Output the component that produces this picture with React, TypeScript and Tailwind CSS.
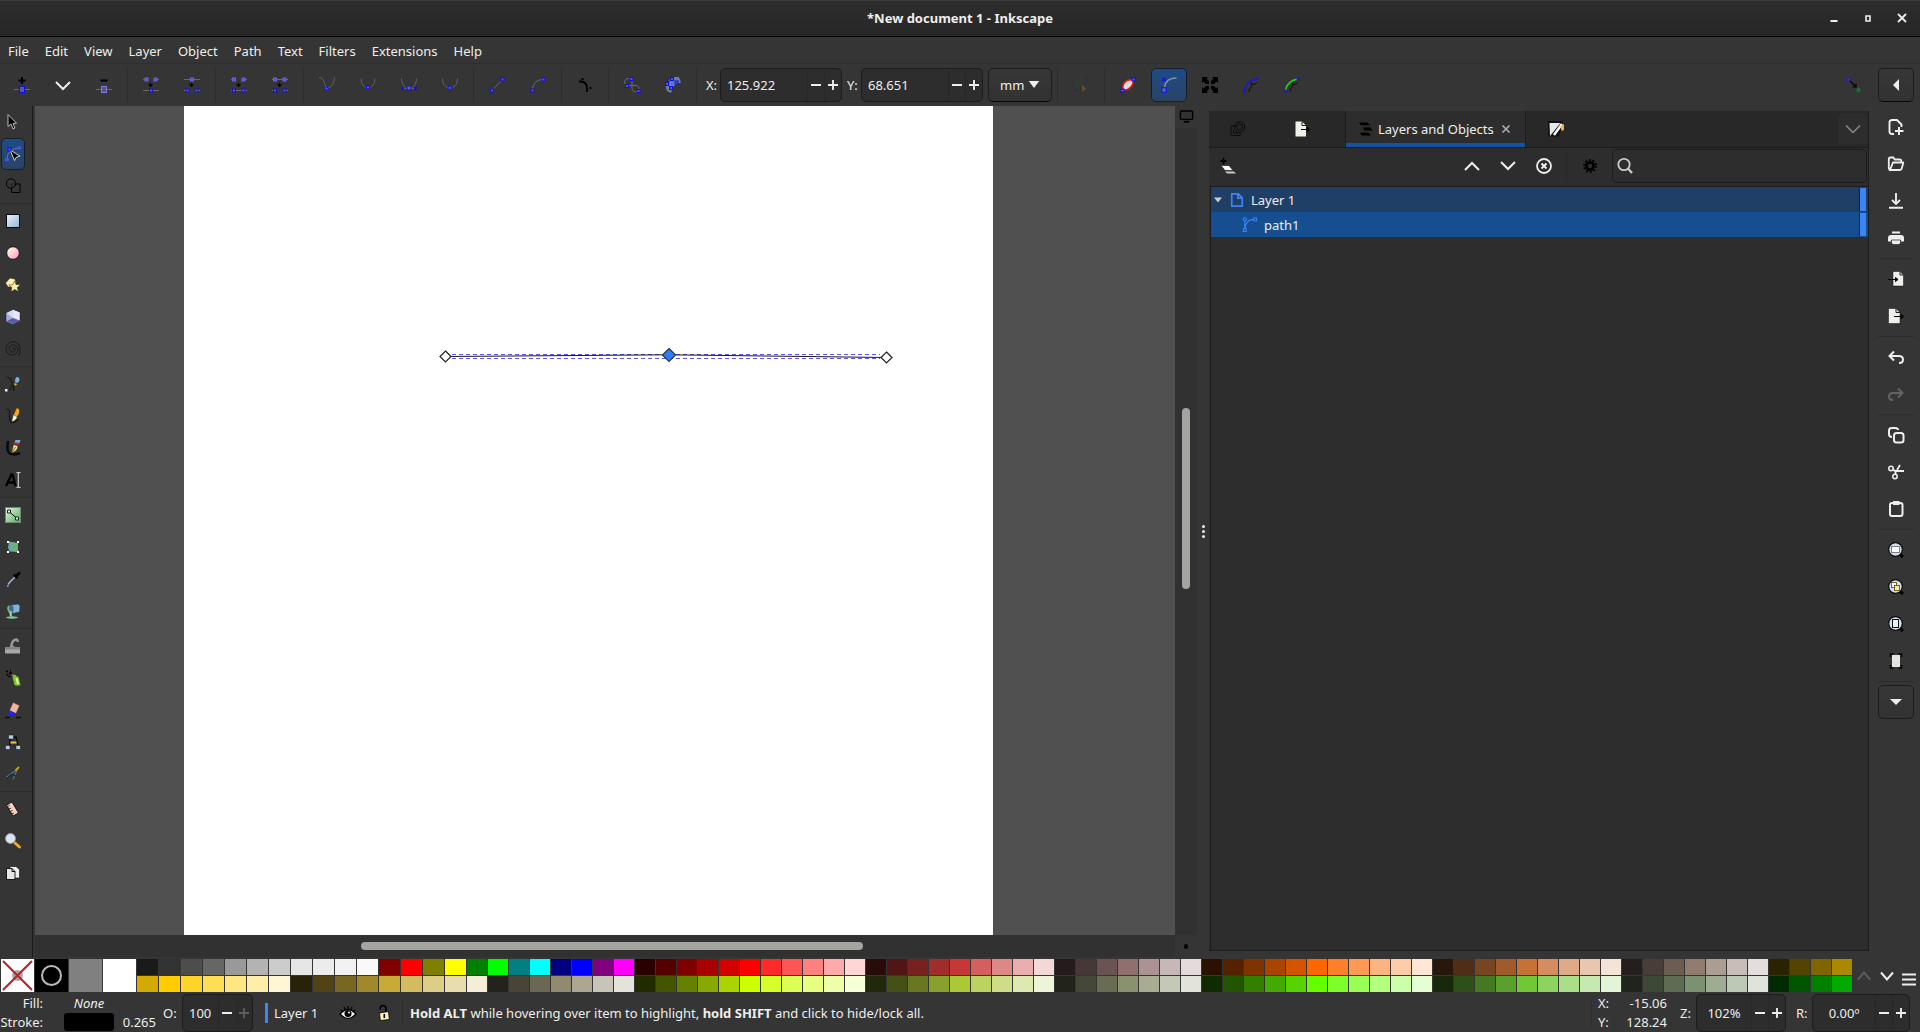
import { useState } from 'react'
import type { ReactNode } from 'react'
import clsx from 'clsx'

const menus = ['File', 'Edit', 'View', 'Layer', 'Object', 'Path', 'Text', 'Filters', 'Extensions', 'Help']

const topSwatches = (
  '1a1a1a 333333 4d4d4d 666666 999999 b3b3b3 cccccc e6e6e6 ececec f2f2f2 f9f9f9 ' +
  '800000 ff0000 808000 ffff00 008000 00ff00 008080 00ffff 000080 0000ff 800080 ff00ff ' +
  '2b0000 550000 800000 aa0000 d40000 ff0000 ff2a2a ff5555 ff8080 ffaaaa ffd5d5 ' +
  '280b0b 501616 782121 a02c2c c83737 d35f5f de8787 e9afaf f4d7d7 ' +
  '241c1c 483737 6c5353 916f6f ac9393 c8b7b7 e3dbdb ' +
  '2b1100 552200 803300 aa4400 d45500 ff6600 ff7f2a ff9955 ffb380 ffccaa ffe6d5 ' +
  '28170b 502d16 784421 a05a2c c87137 d38d5f deaa87 e9c6af f4e3d7 ' +
  '241f1c 483e37 6c5d53 917c6f ac9d93 c8beb7 e3dedb 2b2200 554400 806600 aa8800'
).split(' ')

const bottomSwatches = (
  'd4aa00 ffcc00 ffd42a ffdd55 ffe680 ffeeaa fff6d5 ' +
  '28220b 504416 786721 a0892c c8ab37 d3bc5f decd87 e9ddaf f4eed7 ' +
  '24221c 484537 6c6753 918a6f aca793 c8c4b7 e3e2db ' +
  '222b00 445500 668000 88aa00 aad400 ccff00 d4ff2a ddff55 e5ff80 eeffaa f6ffd5 ' +
  '22280b 445016 677821 89a02c abc837 bcd35f cdde87 dde9af eef4d7 ' +
  '22241c 454837 676c53 8a916f a7ac93 c4c8b7 e2e3db ' +
  '112b00 225500 338000 44aa00 55d400 66ff00 7fff2a 99ff55 b3ff80 ccffaa e5ffd5 ' +
  '17280b 2d5016 447821 5aa02c 71c837 8dd35f aade87 c6e9af e3f4d7 ' +
  '1f241c 3e4837 5d6c53 7c916f 9dac93 bec8b7 dee3db 002b00 005500 008000 00aa00'
).split(' ')

function Icon({ children, className = 'size-4' }: { children: ReactNode; className?: string }) {
  return (
    <svg viewBox="0 0 16 16" fill="none" className={clsx('shrink-0 overflow-visible', className)} aria-hidden="true">
      {children}
    </svg>
  )
}

// Square path node centred on x, y
function Node({ x, y, s = 3, light = false }: { x: number; y: number; s?: number; light?: boolean }) {
  return (
    <rect
      x={x - s / 2}
      y={y - s / 2}
      width={s}
      height={s}
      fill={light ? '#5a5a8c' : '#62629a'}
      stroke={light ? '#6a62ee' : '#0c0cf4'}
    />
  )
}

const arrowDown = <path d="M7.5 5v3M5.5 7.5h4L7.5 10z" fill="#000" stroke="#000" strokeWidth=".6" />

const nodeIcons = {
  add: (
    <>
      <path d="M8 0v7M4.500 3.500h7" stroke="#000" strokeWidth="2" />
      <path d="M0 12.500h16" stroke="#6a6a6a" />
      <rect x="5.500" y="9.500" width="5" height="6" fill="#5a5a94" stroke="#0c0cf4" />
    </>
  ),
  chevron: <path d="M1 5l7 7 7-7" stroke="#eee" strokeWidth="2" />,
  remove: (
    <>
      <path d="M4.500 3.500h7" stroke="#000" strokeWidth="2" />
      <path d="M0 12.500h16" stroke="#6a6a6a" />
      <rect x="5.500" y="9.500" width="5" height="6" fill="#555588" stroke="#7c78dc" />
    </>
  ),
  join: (
    <>
      <path d="M0 2.500h3M13 2.500h3M0 13.500h16" stroke="#6a6a6a" />
      <Node x={3.5} y={2.5} light />
      <Node x={12.5} y={2.5} light />
      {arrowDown}
      <Node x={8} y={13.5} />
    </>
  ),
  split: (
    <>
      <path d="M0 2.500h16M0 13.500h3M13 13.500h3" stroke="#6a6a6a" />
      <Node x={8} y={2.5} light />
      {arrowDown}
      <Node x={3.5} y={13.5} />
      <Node x={12.5} y={13.5} />
    </>
  ),
  joinSegment: (
    <>
      <path d="M0 2.500h3M13 2.500h3M0 13.500h16" stroke="#6a6a6a" />
      <Node x={3} y={2.5} light />
      <Node x={12.5} y={2.5} light />
      {arrowDown}
      <Node x={3} y={13.5} />
      <Node x={12.5} y={13.5} />
    </>
  ),
  deleteSegment: (
    <>
      <path d="M0 2.500h16M0 13.500h3M13 13.500h3" stroke="#6a6a6a" />
      <Node x={3} y={2.5} light />
      <Node x={12.5} y={2.5} light />
      {arrowDown}
      <Node x={3} y={13.5} />
      <Node x={12.5} y={13.5} />
    </>
  ),
  cusp: (
    <>
      <path d="M0 .5C6 1 5 8 7.500 11.500C13 10 15 7 15.500.5" stroke="#636363" />
      <path d="M7.500 9.500l2 2-2 2-2-2z" fill="#5050a8" stroke="#0c0cf4" />
    </>
  ),
  smooth: (
    <>
      <path d="M1 1.500C1 14 15 14 15 1.500" stroke="#636363" />
      <Node x={8} y={10.5} />
    </>
  ),
  symmetric: (
    <>
      <path d="M.5 1.500C.5 14.500 15.500 14.500 15.500 1.500M1 11.500h14" stroke="#636363" />
      <Node x={8} y={11} s={4} />
      <circle cx="1.500" cy="11.500" r="1.300" fill="#0c0cf4" />
      <circle cx="14.500" cy="11.500" r="1.300" fill="#0c0cf4" />
    </>
  ),
  auto: (
    <>
      <path d="M.5 1.500C.5 14.500 15.500 14.500 15.500 1.500" stroke="#636363" />
      <circle cx="8" cy="11" r="2" fill="#5050a8" stroke="#0c0cf4" />
    </>
  ),
  line: (
    <>
      <path d="M3 13.500L13.500 2.500" stroke="#6a6a6a" />
      <Node x={3} y={13.5} />
      <Node x={13.5} y={2.5} />
    </>
  ),
  curve: (
    <>
      <path d="M2.500 13.500C2.500 6 7 2.500 13.500 2.500" stroke="#6a6a6a" />
      <Node x={2.5} y={13.5} />
      <Node x={13.5} y={2.5} />
    </>
  ),
  corners: (
    <>
      <path d="M2 4.500h3q5 1 5 7v3.500" stroke="#000" strokeWidth="1.800" />
      <path d="M4.500 1h2v2h-2zM12.500 10h2v2h-2z" fill="#000" />
    </>
  ),
  objectToPath: (
    <>
      <path d="M7 1.500H4Q.5 2 .5 5T3 8.500h9q3.500 0 3 5M8 2v9q0 4 5 4" stroke="#6a6a6a" />
      <Node x={7.5} y={2} />
      <Node x={3} y={9} />
      <Node x={14.5} y={14} />
    </>
  ),
  strokeToPath: (
    <>
      <path d="M0 7l4-1 1-5 4-1h5l2 5.500-5 1.500-3 3-2 6-4-2-1-3z" fill="#667daa" />
      <Node x={7} y={2} />
      <Node x={11.5} y={5.5} />
      <Node x={2} y={7} />
      <Node x={6} y={11} />
    </>
  ),
}

const node = (name: keyof typeof nodeIcons) => <Icon>{nodeIcons[name]}</Icon>

function Sep() {
  return <span className="mx-[2px] h-[34px] w-[2px] border-r border-[#2c2c2c]" />
}

function ToolButton({ label, children }: { label: string; children: ReactNode }) {
  return (
    <button aria-label={label} className="flex h-[34px] w-[41px] shrink-0 items-center justify-center">
      {children}
    </button>
  )
}

function Spin({ label, value, className, center = false, full = false }: {
  label: string
  value: string
  className: string
  center?: boolean
  full?: boolean
}) {
  const [text, setText] = useState(value)
  return (
    <span className={clsx('flex overflow-hidden rounded-[5px] border border-[#1c1c1c] bg-[#2d2d2d]', className)}>
      <input
        aria-label={label}
        value={text}
        onChange={(e) => setText(e.target.value)}
        className={clsx('w-0 grow bg-transparent outline-none', center ? 'text-center' : 'pl-[6px]')}
      />
      <button aria-label={`${label} decrease`} className="flex w-[17px] items-center justify-center border-l border-[#282828]">
        <Icon className="size-[10px]"><path d="M0 8h16" stroke="#eee" strokeWidth="3" /></Icon>
      </button>
      <button
        aria-label={`${label} increase`}
        disabled={full}
        className={clsx('flex w-[17px] items-center justify-center border-l border-[#282828]', full && 'opacity-25')}
      >
        <Icon className="size-[10px]"><path d="M0 8h16M8 0v16" stroke="#eee" strokeWidth="3" /></Icon>
      </button>
    </span>
  )
}

function TitleBar() {
  return (
    <header className="grid h-[37px] shrink-0 grid-cols-[1fr_auto_1fr] items-center border-t border-b border-t-[#3a3a3a] border-b-[#060606] bg-linear-to-b from-[#2d2d2d] to-[#262626] pb-[2px]">
      <span />
      <h1 className="text-[13px] font-bold">*New document 1 - Inkscape</h1>
      <div className="flex justify-end gap-[18px] pr-[10px]">
        <button aria-label="Minimize"><Icon><path d="M4.500 11h7" stroke="#eee" strokeWidth="2" /></Icon></button>
        <button aria-label="Maximize"><Icon><path d="M6 6h4v5H6z" stroke="#eee" strokeWidth="1.600" /></Icon></button>
        <button aria-label="Close"><Icon><path d="M4 4l8 8M12 4l-8 8" stroke="#eee" strokeWidth="1.800" /></Icon></button>
      </div>
    </header>
  )
}

function NodeToolbar() {
  return (
    <div className="flex h-[42px] shrink-0 items-center pl-[1px]">
      <ToolButton label="Insert node">{node('add')}</ToolButton>
      <ToolButton label="Insert options">{node('chevron')}</ToolButton>
      <ToolButton label="Delete node">{node('remove')}</ToolButton>
      <Sep />
      <ToolButton label="Join nodes">{node('join')}</ToolButton>
      <ToolButton label="Break nodes">{node('split')}</ToolButton>
      <Sep />
      <ToolButton label="Join with segment">{node('joinSegment')}</ToolButton>
      <ToolButton label="Delete segment">{node('deleteSegment')}</ToolButton>
      <Sep />
      <ToolButton label="Cusp">{node('cusp')}</ToolButton>
      <ToolButton label="Smooth">{node('smooth')}</ToolButton>
      <ToolButton label="Symmetric">{node('symmetric')}</ToolButton>
      <ToolButton label="Auto smooth">{node('auto')}</ToolButton>
      <Sep />
      <ToolButton label="Line">{node('line')}</ToolButton>
      <ToolButton label="Curve">{node('curve')}</ToolButton>
      <Sep />
      <ToolButton label="Add corners effect">{node('corners')}</ToolButton>
      <Sep />
      <ToolButton label="Object to path">{node('objectToPath')}</ToolButton>
      <ToolButton label="Stroke to path">{node('strokeToPath')}</ToolButton>
      <Sep />
      <span className="ml-[7px] w-[14px]">X:</span>
      <Spin label="X" value="125.922" className="h-[34px] w-[122px]" />
      <span className="ml-[5px] w-[14px]">Y:</span>
      <Spin label="Y" value="68.651" className="h-[34px] w-[122px]" />
      <span className="relative ml-[5px] flex">
        <select aria-label="Unit" className="h-[34px] w-16 appearance-none rounded-[5px] border border-[#1c1c1c] border-b-[#080808] bg-linear-to-b from-[#373737] to-[#323232] pl-[11px] outline-none">
          <option>mm</option>
          <option>px</option>
          <option>in</option>
        </select>
        <svg viewBox="0 0 12 8" className="pointer-events-none absolute top-[13px] right-[12px] h-[7px] w-[12px]" aria-hidden="true">
          <path d="M0 0h12L6 8z" fill="#eee" />
        </svg>
      </span>
      <span className="w-[2px]" />
      <Sep />
      <ToolButton label="Next path effect parameter">
        <Icon>
          <path d="M3 12Q3 5 9 4M3 3l3 4" stroke="#2c422c" strokeWidth="1.500" />
          <path d="M9 8l4 3.500L9 15z" fill="#5c5230" />
          <circle cx="3" cy="13" r="1.500" fill="#2b2b58" /><circle cx="13" cy="2.500" r="1.500" fill="#2b2b58" />
        </Icon>
      </ToolButton>
      <Sep />
      <ToolButton label="Show path outline">
        <Icon>
          <path d="M3 13C2 6 6 2 13 3c1 5-4 11-10 10z" fill="#ddd" stroke="#f01010" strokeWidth="1.500" />
          <Node x={2.5} y={13.5} />
          <Node x={13.5} y={2.5} />
        </Icon>
      </ToolButton>
      <span className="flex w-[41px] justify-center">
        <button aria-label="Show Bezier handles" aria-pressed="true" className="flex h-[34px] w-9 items-center justify-center rounded-[5px] border border-[#191e26] bg-linear-to-b from-[#1c4b87] to-[#2a4365]">
          <Icon>
            <path d="M3 12V3" stroke="#2a48b0" />
            <path d="M3.500 11C4 5 8 1 15.500 1" stroke="#8a949f" strokeWidth="1.300" />
            <circle cx="3" cy="2.500" r="1.400" stroke="#1010f0" strokeWidth="1.200" />
            <Node x={3} y={13} s={4.5} />
          </Icon>
        </button>
      </span>
      <ToolButton label="Show transform handles">
        <Icon>
          <path d="M0 0h6L4.500 1.500 7 4v3H4L1.500 4.500 0 6zM16 0h-6l1.500 1.500L9 4v3h3l2.500-2.500L16 6zM0 16h6l-1.500-1.500L7 12V9H4l-2.500 2.500L0 10zM16 16h-6l1.500-1.500L9 12V9h3l2.500 2.500L16 10z" fill="#000" />
        </Icon>
      </ToolButton>
      <ToolButton label="Show mask">
        <Icon>
          <path d="M6 15q0-3 2-5T8 6l2 1.500q2 0 4-2" stroke="#0c0c0c" strokeWidth=".9" />
          <path d="M1.500 13.500Q3 4 13.500 2" stroke="#1414e6" strokeWidth="1.500" />
          <circle cx="1.500" cy="14" r="1.600" fill="#1414e6" /><circle cx="14" cy="1.800" r="1.600" fill="#1414e6" />
        </Icon>
      </ToolButton>
      <ToolButton label="Show clip">
        <Icon>
          <path d="M6 15q0-3 2-5T8 6l2 1.500q2 0 4-2" stroke="#0c0c0c" strokeWidth=".9" />
          <path d="M1.500 13.500Q3 4 13.500 2" stroke="#18e018" strokeWidth="1.500" />
          <circle cx="1.500" cy="14" r="1.600" fill="#1414e6" /><circle cx="14" cy="1.800" r="1.600" fill="#1414e6" />
        </Icon>
      </ToolButton>
      <span className="grow" />
      <ToolButton label="Snapping">
        <Icon>
          <path d="M4 4l5 5M10 6.500V10H6.500" stroke="#000" strokeWidth="1.200" />
          <circle cx="2.500" cy="2.500" r="1.800" fill="#3c3ca0" stroke="#1414e6" />
          <path d="M12.500 10.500l2 2.500-2 2.500-2-2.500z" fill="#285a60" stroke="#108018" />
        </Icon>
      </ToolButton>
      <button aria-label="Snap options" className="mr-[6px] ml-1 flex h-[34px] w-9 items-center justify-center rounded-[5px] border border-[#1c1c1c] border-b-[#080808] bg-linear-to-b from-[#373737] to-[#323232]">
        <Icon><path d="M11 2v12L5 8z" fill="#eee" /></Icon>
      </button>
    </div>
  )
}

const cursor = <path d="M5 .5v12l3-2.500 2 5 2-1-2-4.500 3.500-.3z" fill="#000" stroke="#ccc" strokeWidth=".9" />

const toolGroups: { label: string; icon: ReactNode }[][] = [
  [
    { label: 'Selector', icon: <g transform="translate(-2 0)">{cursor}</g> },
    {
      label: 'Node editor',
      icon: (
        <>
          <path d="M2 13Q2 3 14 2" stroke="#6a7a9a" />
          <rect x="0" y="12" width="4" height="3" fill="#4c50d8" />
          <rect x="12.500" y="0" width="3.500" height="3.500" fill="#4c50d8" />
          <path d="M5 4l4.500 10.500 1.500-3 4-1.500z" fill="#000" stroke="#e8e8e8" strokeWidth=".9" />
          <Node x={4.5} y={3.5} />
        </>
      ),
    },
    {
      label: 'Shape builder',
      icon: (
        <>
          <circle cx="6" cy="5.500" r="4.700" stroke="#000" />
          <path d="M10.500 6H15v8.500H6.500V10" stroke="#000" />
          <path d="M6.500 10V6h4" stroke="#151515" strokeWidth=".6" />
        </>
      ),
    },
  ],
  [
    { label: 'Rectangle', icon: <rect x="1.500" y="1.500" width="13" height="13" fill="url(#blue)" stroke="#0a0a0a" /> },
    { label: 'Ellipse', icon: <circle cx="8" cy="8" r="6.300" fill="url(#pink)" stroke="#0a0a0a" strokeWidth=".9" /> },
    {
      label: 'Star',
      icon: (
        <>
          <path d="M5 1l5 1 1 4-3 4-5 0-2.500-4z" fill="#fff2b0" stroke="#222" strokeWidth=".6" />
          <path d="M9.500 4l1.500 3.500 4.500.2-3.200 2.800 1.200 4-3.800-2-3.700 2.300.8-4.300-3-2.500 4-.3z" fill="#fdf096" stroke="#222" strokeWidth=".5" />
        </>
      ),
    },
    {
      label: '3D box',
      icon: (
        <>
          <path d="M1 4l7-3.500 7 3v8L8 15.500l-7-3z" fill="#a9a9dc" stroke="#222" strokeWidth=".5" />
          <path d="M1.500 4L8 1l6.500 2.500-1 8L8 9z" fill="#d9d9f2" />
          <path d="M8 1v8l6.500 2.500v-8z" fill="#e6e6fa" />
          <path d="M8 9l6.500 2.500L8 15l-6-3z" fill="#5a5aa8" />
        </>
      ),
    },
    {
      label: 'Spiral',
      icon: <path d="M8 8.500c-1-1 1-2.500 2-1s-.5 4-3 3.500-3.500-4-1.500-6 6-1 7 2-1 6.500-4.500 7S1 12 .8 8.500 4 .8 8 .8 15.500 4 15 9s-1 5-2 6" stroke="#151515" strokeWidth=".9" />,
    },
  ],
  [
    {
      label: 'Bezier pen',
      icon: (
        <>
          <path d="M1 1q5 0 6 5t-3 8.500" stroke="#1c1c1c" strokeWidth="1.200" />
          <path d="M9 9q-1 3 0 6" stroke="#111" strokeWidth="1.100" />
          <rect x="0" y="13" width="2.500" height="2.500" fill="#eee" />
          <path d="M12 .5c3 0 4 4 1 6.500l-3 0c-1-3 0-5.500 2-6.500z" fill="#7ab2d6" stroke="#111" strokeWidth=".5" />
          <path d="M9.500 7l3 1-3 2z" fill="#f4b52a" />
        </>
      ),
    },
    {
      label: 'Pencil',
      icon: (
        <>
          <path d="M1 1q4 0 3.500 5T6 14.500q4 1 7-3" stroke="#151515" strokeWidth="1.200" />
          <path d="M11.500 0c3 0 3.500 3 2.500 6L12 9 8.500 7z" fill="#f8a41c" stroke="#222" strokeWidth=".4" />
          <path d="M8.500 7L12 9q-1 3-5 4.500z" fill="#fff4cf" />
        </>
      ),
    },
    {
      label: 'Calligraphy',
      icon: (
        <>
          <path d="M3 1Q1 13 6 14t9-1" stroke="#0a0a0a" strokeWidth="2.600" />
          <path d="M10.500 0h5l-1 3-5-.5z" fill="#7ab2d6" />
          <path d="M9.500 2.500l5 .5-.5 2-5-1z" fill="#d02a2a" />
          <path d="M8.500 4.500L13 6q0 5-6.500 7z" fill="#fbe08a" stroke="#222" strokeWidth=".5" />
          <path d="M10.500 7L7 12.500" stroke="#5a4210" strokeWidth=".8" />
        </>
      ),
    },
    {
      label: 'Text',
      icon: (
        <>
          <path d="M1 14L6.500 2.500h1L10.500 14M3.500 10.500h6" stroke="#000" strokeWidth="2.400" />
          <path d="M11.500.5h1l.8.8.8-.8h1.500M13.300 1v14M11.500 15.500h1l.8-.8.8.8h1.500" stroke="#ccc" strokeWidth="1.200" />
        </>
      ),
    },
  ],
  [
    {
      label: 'Gradient',
      icon: (
        <>
          <rect x=".5" y=".5" width="15" height="15" fill="url(#green)" stroke="#6d8a6d" />
          <path d="M4 4.500l8 7" stroke="#111" />
          <path d="M2.500 3h3v3h-3zM10.500 10h3v3h-3z" fill="#eee" stroke="#222" />
        </>
      ),
    },
    {
      label: 'Mesh',
      icon: (
        <>
          <path d="M4 2.500l9 1.500-.5 6 1 3-9-.5-1.500-4z" fill="#6aa8a0" />
          <path d="M8 4l5 0v8.500L8 12z" fill="#69b56f" />
          <path d="M2 2h2v2H2zM12 2h2v2h-2zM2 12h2v2H2zM12 12h2v2h-2z" fill="#fff" />
        </>
      ),
    },
    {
      label: 'Dropper',
      icon: (
        <>
          <path d="M10 6L5 11l-2 2.500" stroke="#9cb8d8" strokeWidth="1.500" />
          <path d="M9 3.500l3.500 3.500M11 5L15 1.500" stroke="#000" strokeWidth="2.600" />
          <circle cx="2.800" cy="15" r="1" fill="#6f9cd8" />
        </>
      ),
    },
    {
      label: 'Paint bucket',
      icon: (
        <>
          <path d="M6 2l7-1 2 2-.5 6-7 1.500z" fill="#7db3d8" stroke="#233" strokeWidth=".5" />
          <ellipse cx="6" cy="6" rx="2.500" ry="4" fill="#45668a" />
          <path d="M4 3Q2 5 4 8t1.500 5" stroke="#6cc08a" strokeWidth="1.600" />
          <path d="M6 8v6" stroke="#e6f4e8" />
          <ellipse cx="7" cy="14.500" rx="6" ry="1.200" fill="#7ccf90" />
        </>
      ),
    },
  ],
  [
    {
      label: 'Tweak',
      icon: (
        <>
          <rect x="0" y="9" width="15" height="6.500" fill="#a8a8a8" />
          <path d="M0 9h4.500l3-2 3 2H15v2.500H0z" fill="#858585" />
          <path d="M6 9q1-7 5-7.500 2 0 1.500 2.500" stroke="#9a9a9a" strokeWidth="2.400" />
        </>
      ),
    },
    {
      label: 'Spray',
      icon: (
        <>
          <path d="M1 1.500h2M1.500 5h2M4 3h3M5 1h1M3.500 6.500h2" stroke="#000" strokeWidth="1.400" />
          <path d="M7 4.500l4 .5v2H8z" fill="#c89a3c" />
          <path d="M7.500 7q3-2 6 0l2 8q-3 1.500-6 0z" fill="#7cc42c" />
          <path d="M11.500 8l1.500 6" stroke="#d6f5a8" strokeWidth="2" />
        </>
      ),
    },
    {
      label: 'Eraser',
      icon: (
        <>
          <path d="M0 15.500h5M11 15.500h5" stroke="#111" strokeWidth="1.300" />
          <path d="M8 .5l6.500 3L11 11.500 4.500 8.500z" fill="#f2b59c" stroke="#333" strokeWidth=".4" />
          <path d="M4.500 8.500l6.500 3L8.500 15 2.500 12z" fill="#2424e0" />
        </>
      ),
    },
    {
      label: 'Connector',
      icon: (
        <>
          <path d="M6 3h5l2 8M5 5v7M5 5v4" stroke="#0a0a0a" strokeWidth="1.300" />
          <path d="M3.500 1h5v4h-5zM.5 11.500h4.500v4H.5zM11 11.500h4.500v4H11z" fill="#b6cce6" stroke="#111" strokeWidth=".5" />
          <path d="M5.500 7.500h6v2h-6z" fill="#f4c63c" />
        </>
      ),
    },
    {
      label: 'LPE tool',
      icon: (
        <>
          <path d="M12 3.500L1.500 11M12 4L8 13.500" stroke="#4c7690" strokeWidth="1.200" />
          <path d="M2 13q3-7 9-3" stroke="#1c262c" />
          <path d="M10.500 4.500L14 1" stroke="#c2a42c" strokeWidth="1.800" />
        </>
      ),
    },
  ],
  [
    {
      label: 'Measure',
      icon: (
        <>
          <path d="M1.500 4l5.500-3 6.500 11L8 15z" fill="#f7cfc0" stroke="#111" strokeWidth=".9" />
          <path d="M2.500 5.500l2-1M4 8l2-1M5.500 10.500l2-1M7 13l2-1" stroke="#222" strokeWidth=".9" />
        </>
      ),
    },
    {
      label: 'Zoom',
      icon: (
        <>
          <path d="M10 10l4.500 4" stroke="#f2a91c" strokeWidth="3" strokeLinecap="round" />
          <circle cx="5.500" cy="5.500" r="5" fill="#d8e6f4" stroke="#8a96a2" />
        </>
      ),
    },
    {
      label: 'Pages',
      icon: (
        <>
          <path d="M5 1.500h6l3.500 3V13H5z" fill="#eee" stroke="#0a0a0a" strokeWidth=".6" />
          <path d="M1.500 3.500H7l3 3V14.500H1.500z" fill="#e6e6e6" stroke="#0a0a0a" strokeWidth=".9" />
          <path d="M7 3.500v3h3" stroke="#0a0a0a" />
        </>
      ),
    },
  ],
]

function Toolbox() {
  return (
    <nav aria-label="Tools" className="flex w-[33px] shrink-0 flex-col border-r border-[#1a1a1a]">
      {toolGroups.map((group, i) => (
        <div key={group[0].label} className={clsx('flex flex-col', i > 0 && 'mt-[1px] border-t border-[#2c2c2c] pt-[1px]')}>
          {group.map((tool) => (
            <button
              key={tool.label}
              aria-label={tool.label}
              className={clsx(
                'ml-[1px] flex h-8 w-6 items-center justify-center rounded-[5px] border',
                tool.label === 'Node editor' ? 'border-[#191e26] bg-linear-to-b from-[#1c4b87] to-[#2a4365]' : 'border-transparent'
              )}
            >
              <Icon>{tool.icon}</Icon>
            </button>
          ))}
        </div>
      ))}
    </nav>
  )
}

function Canvas() {
  return (
    <div className="grid min-w-0 grow grid-cols-[1fr_22px] grid-rows-[1fr_22px]">
      <div className="flex overflow-hidden bg-[#505050] pl-[149px]">
        <div className="w-[809px] shrink-0 bg-white">
          <svg width="809" height="500" fill="none" aria-label="path1">
            <path d="M268 248.500H696M268 252.500H696" stroke="#5b57e6" strokeDasharray="4 3" />
            <path d="M262 250.500L485 248.800L702 251.500" stroke="#1a1a1a" />
            <path d="M261.500 245l5.500 5.500-5.500 5.500-5.500-5.500zM702.500 246l5.500 5.500-5.500 5.500-5.500-5.500z" fill="#fff" stroke="#222" strokeWidth="1.200" />
            <path d="M485 242.500l6.500 6.500-6.500 6.500-6.500-6.500z" fill="#2a7fff" stroke="#333" strokeWidth="1.200" />
          </svg>
        </div>
      </div>
      <div className="flex flex-col items-center bg-[#313131]">
        <button aria-label="Display mode" className="flex h-[22px] w-full items-center justify-center bg-[#353535]">
          <Icon className="size-[15px]">
            <rect x="1.500" y="1" width="13" height="9" rx="1" fill="#333" stroke="#000" strokeWidth="1.500" />
            <path d="M5 12.500h6" stroke="#000" strokeWidth="2" />
          </Icon>
        </button>
        <div className="mt-[280px] h-[181px] w-2 rounded-full bg-[#a4a4a1]" />
      </div>
      <div className="flex items-center bg-[#313131]">
        <div className="ml-[326px] h-2 w-[502px] rounded-full bg-[#a4a4a1]" />
      </div>
      <button aria-label="Color management" className="flex items-center justify-center bg-[#353535]">
        <span className="h-[5px] w-1 rounded-full bg-black" />
      </button>
    </div>
  )
}

function LayersPanel() {
  return (
    <section className="mt-[5px] mb-[6px] flex w-[660px] shrink-0 flex-col border-r border-b border-[#1c1c1c] bg-[#2d2d2d]">
      <div role="tablist" className="flex h-[37px] shrink-0 border-b border-[#1c1c1c] bg-[#282828]">
        <button role="tab" aria-label="Fill and Stroke" className="flex w-[58px] items-center justify-center">
          <Icon>
            <path d="M1 5h5M1 5v9.500h9V11" stroke="#0c0c0c" />
            <circle cx="9.500" cy="6" r="5.300" stroke="#0c0c0c" /><circle cx="9.500" cy="6" r="3" stroke="#0c0c0c" />
            <path d="M3.500 9v3H8" stroke="#0c0c0c" />
          </Icon>
        </button>
        <button role="tab" aria-label="Export" className="flex w-[69px] items-center justify-center">
          <Icon>
            <path d="M1.500.5H8l4 4v11H1.500z" fill="#f0f0ea" />
            <path d="M8 .5v4h4" stroke="#222" />
            <path d="M7 8.500h7M13 6.500L15.500 8.500l-2.500 2z" fill="#000" stroke="#000" />
          </Icon>
        </button>
        <div className="ml-[9px] flex items-center border-x border-[#1c1c1c] bg-[#2d2d2d] pr-[15px] pl-3 shadow-[inset_0_-4px_#15539e]">
          <button role="tab" aria-selected="true" className="flex items-center gap-[5px]">
            <Icon className="h-4 w-[15px]">
              <path d="M1 1h9l3 3H3zM5 6.500h8l3 3H7zM2 12h9l3 3H4z" fill="#000" />
            </Icon>
            Layers and Objects
          </button>
          <button aria-label="Close tab" className="ml-2">
            <Icon className="size-2"><path d="M1 1l14 14M15 1L1 15" stroke="#aaa" strokeWidth="3.500" /></Icon>
          </button>
        </div>
        <button role="tab" aria-label="Objects" className="flex w-[60px] items-center justify-center">
          <Icon>
            <path d="M0 0h15L3 15.500H0z" fill="#111" />
            <path d="M1.500 2h11L2 15z" fill="#e8e8e8" />
            <path d="M15 1L3 15.500h7l3-6z" fill="#0c0c0c" />
            <path d="M14 3L6 14" stroke="#fff" strokeWidth="2.500" />
            <path d="M12.500 5L16 3v6l-2.500 1z" fill="#f4b52a" />
          </Icon>
        </button>
        <button aria-label="Tab list" className="mt-[3px] ml-auto flex h-[30px] w-[30px] items-center justify-center rounded bg-[#2d2d2d]">
          <Icon className="size-[14px]"><path d="M0 4l8 8 8-8" stroke="#888" strokeWidth="1.800" /></Icon>
        </button>
      </div>

      <div className="flex h-[38px] shrink-0 items-center pr-[1px] pb-[2px]">
        <button aria-label="Add layer" className="flex w-[38px] justify-center">
          <Icon>
            <path d="M3.500 0v6M.5 3h6" stroke="#000" strokeWidth="1.800" />
            <path d="M1 7.500h8l4 5H5z" fill="#fff" stroke="#111" strokeWidth=".6" />
            <path d="M5 13.500h9l2 2H7z" fill="#ccc" />
          </Icon>
        </button>
        <span className="ml-auto" />
        <button aria-label="Raise" className="flex w-9 justify-center"><Icon><path d="M1 12l7-7 7 7" stroke="#eee" strokeWidth="2" /></Icon></button>
        <button aria-label="Lower" className="flex w-9 justify-center"><Icon><path d="M1 4l7 7 7-7" stroke="#eee" strokeWidth="2" /></Icon></button>
        <button aria-label="Delete" className="flex w-9 justify-center">
          <Icon>
            <circle cx="8" cy="8" r="7" stroke="#eee" strokeWidth="1.800" />
            <path d="M5.500 5.500l5 5M10.500 5.500l-5 5" stroke="#eee" strokeWidth="2" />
          </Icon>
        </button>
        <span className="h-8 w-[5px] border-r border-[#282828]" />
        <button aria-label="Settings" className="flex w-[45px] justify-center">
          <Icon className="size-[14px]">
            <circle cx="8" cy="8" r="4" stroke="#000" strokeWidth="3" />
            <circle cx="8" cy="8" r="6.500" stroke="#000" strokeWidth="3" strokeDasharray="2 2.080" />
          </Icon>
        </button>
        <label className="flex h-[34px] w-[255px] items-center gap-2 rounded-[5px] border border-[#1c1c1c] bg-[#2d2d2d] pl-1">
          <Icon><circle cx="7" cy="6.500" r="5.700" stroke="#ccc" strokeWidth="1.800" /><path d="M11 10.500l4 4.500" stroke="#ccc" strokeWidth="2.200" /></Icon>
          <input type="search" aria-label="Search layers" className="w-0 grow bg-transparent outline-none" />
        </label>
      </div>

      <ul className="ml-[1px] grow border-t border-l border-[#1c1c1c]">
        <li className="flex h-[25px] items-center bg-[#203f66] pr-[2px]">
          <button aria-label="Collapse" className="ml-[3px]"><Icon className="size-2"><path d="M0 3h16l-8 10z" fill="#ccc" /></Icon></button>
          <Icon className="ml-2 size-[14px]"><path d="M2 1h7.500L14 5.500V15H2zM9 1v5h5" stroke="#3d84f5" strokeWidth="1.900" /></Icon>
          <span className="ml-[7px] grow">Layer 1</span>
          <span className="h-[23px] w-[7px] border-l border-[#1c1c1c] bg-[#3d84f5]" />
        </li>
        <li className="flex h-[25px] items-center bg-[#154f91] pr-[2px]">
          <Icon className="ml-[31px] size-[15px]">
            <path d="M3 12.500V4M3.500 12Q4 3 12 2.500" stroke="#3d84f5" strokeWidth="1.200" />
            <path d="M1.500 12.500h3v3h-3zM12.500 1h3v3h-3z" stroke="#3d84f5" strokeWidth="1.200" />
            <circle cx="3" cy="2.500" r="1.700" stroke="#3d84f5" strokeWidth="1.200" />
          </Icon>
          <span className="ml-[7px] grow">path1</span>
          <span className="h-[23px] w-[7px] border-l border-[#1c1c1c] bg-[#3d84f5]" />
        </li>
      </ul>
    </section>
  )
}

const lens = (inner: ReactNode) => (
  <>
    <path d="M11.500 12l3.500 3" stroke="#000" strokeWidth="3" />
    <circle cx="7.500" cy="7.500" r="6.800" fill="#cfe0f2" stroke="#0a0a0a" strokeWidth="1.200" />
    {inner}
  </>
)

const commandGroups: { label: string; icon: ReactNode }[][] = [
  [
    { label: 'New', icon: <path d="M6 15H4q-2.500 0-2.500-2.500v-9Q1.500 1 4 1h5l4.500 4.500V8M11 8v8M7 12h8.500" stroke="#eee" strokeWidth="1.900" /> },
    { label: 'Open', icon: <path d="M2 14q-1.200-1-1.200-2V3q0-1.500 1.500-1.500h3l1.500 2h5q1.500 0 1.500 2v1M2 14l3-7.500h10q.5 0 0 1.500l-1.500 5q-.5 1-2 1z" stroke="#eee" strokeWidth="1.800" /> },
    { label: 'Save', icon: <path d="M8 0v10M4 7l4 4 4-4M1 14.800h14" stroke="#eee" strokeWidth="1.900" /> },
    {
      label: 'Print',
      icon: (
        <>
          <path d="M4 1.500h8v2H4zM3 5h10q3 0 3 3v3.500h-3V10H3v1.500H0V8q0-3 3-3z" fill="#eee" />
          <path d="M3.500 10h9v2.500q0 2-2 2h-5q-2 0-2-2z" fill="#eee" stroke="#353535" strokeWidth=".8" />
        </>
      ),
    },
  ],
  [
    {
      label: 'Import',
      icon: (
        <>
          <path d="M5 .5h7l3.500 3.500v11H5z" fill="#f0f0ea" stroke="#111" strokeWidth=".5" />
          <path d="M12 .5V4h3.500" stroke="#222" />
          <path d="M0 8.500h8M7.500 6.500L10 8.500l-2.500 2z" fill="#000" stroke="#000" />
        </>
      ),
    },
    {
      label: 'Export',
      icon: (
        <>
          <path d="M.5.5H8L12 4.500v11H.5z" fill="#f0f0ea" stroke="#111" strokeWidth=".5" />
          <path d="M8 .5v4h4" stroke="#222" />
          <path d="M6 8.500h8M13 6.500l2.500 2-2.500 2z" fill="#000" stroke="#000" />
        </>
      ),
    },
  ],
  [
    { label: 'Undo', icon: <path d="M6 2.500L1.500 7 6 11.500M1 7h10q4 0 4 3.500T11 14" stroke="#eee" strokeWidth="2" /> },
    { label: 'Redo', icon: <path d="M10 2.500L14.500 7 10 11.500M15 7H5q-4 0-4 3.500T5 14" stroke="#646464" strokeWidth="2" /> },
  ],
  [
    {
      label: 'Copy',
      icon: (
        <>
          <path d="M4 10q-3 0-3-3V3.500Q1 1 3.500 1H7q3 0 3 2" stroke="#eee" strokeWidth="2" />
          <rect x="6" y="6" width="9.500" height="9.500" rx="2.500" stroke="#eee" strokeWidth="2" />
        </>
      ),
    },
    {
      label: 'Cut',
      icon: (
        <>
          <circle cx="3" cy="4.500" r="2.200" stroke="#eee" strokeWidth="1.600" />
          <circle cx="7" cy="12.500" r="2.200" stroke="#eee" strokeWidth="1.600" />
          <path d="M5 5.500l2 1.500h9M7.500 10V7.500M9 6l3-5" stroke="#eee" strokeWidth="1.800" />
        </>
      ),
    },
    {
      label: 'Paste',
      icon: (
        <>
          <rect x="2" y="2" width="12.500" height="13" rx="2" stroke="#eee" strokeWidth="2" />
          <path d="M5 0h6.500v4H5z" fill="#eee" />
        </>
      ),
    },
  ],
  [
    { label: 'Zoom selection', icon: lens(<rect x="3.500" y="4.500" width="8" height="6" fill="#fff" stroke="#111" strokeDasharray="1 1" />) },
    {
      label: 'Zoom drawing',
      icon: lens(
        <>
          <rect x="3.500" y="3.500" width="5" height="5" fill="#fff" stroke="#6a520c" strokeWidth=".9" />
          <rect x="6.500" y="6.500" width="5" height="5" fill="#ffe9a0" stroke="#6a520c" strokeWidth=".9" />
        </>
      ),
    },
    { label: 'Zoom page', icon: lens(<rect x="4.500" y="3.500" width="6" height="8" fill="#eee" stroke="#111" />) },
    {
      label: 'Center page',
      icon: (
        <>
          <rect x="4" y="2" width="8" height="12" fill="#e4e4e0" />
          <path d="M2.500 4V1h3M10.500 1h3v3M2.500 12v3h3M10.500 15h3v-3" stroke="#000" strokeWidth="1.500" />
        </>
      ),
    },
  ],
]

function Commands() {
  return (
    <nav aria-label="Commands" className="flex grow flex-col items-center pt-[2px]">
      {commandGroups.map((group) => (
        <div key={group[0].label} className="flex w-9 flex-col border-b border-[#2c2c2c] pb-[2px] not-first:pt-[1px]">
          {group.map((cmd) => (
            <button key={cmd.label} aria-label={cmd.label} className="flex h-[37px] items-center justify-center">
              <Icon>{cmd.icon}</Icon>
            </button>
          ))}
        </div>
      ))}
      <button aria-label="More commands" className="mt-[3px] flex h-[34px] w-9 items-center justify-center rounded-[5px] border border-[#1c1c1c] bg-linear-to-b from-[#373737] to-[#323232]">
        <Icon className="size-3"><path d="M0 4h16l-8 8z" fill="#eee" /></Icon>
      </button>
    </nav>
  )
}

function SwatchRow({ colors }: { colors: string[] }) {
  return (
    <div className="grid h-4 [grid-template-columns:repeat(15,22fr)_repeat(66,21fr)]">
      {colors.map((c, i) => (
        <button key={i} aria-label={`#${c}`} className="mr-[1px]" style={{ backgroundColor: `#${c}` }} />
      ))}
    </div>
  )
}

function Palette() {
  return (
    <div className="flex h-[33px] shrink-0 items-center">
      <div className="flex h-full gap-[1px] pr-[1px] pl-[1px]">
        <button aria-label="No color" className="flex w-[33px] items-center justify-center bg-white">
          <svg viewBox="0 0 33 33" className="size-[33px]" fill="none" aria-hidden="true">
            <circle cx="16.500" cy="16.500" r="5.500" fill="#aaa" />
            <path d="M2 2l29 29M31 2L2 31" stroke="#b9222f" strokeWidth="2.200" />
          </svg>
        </button>
        <button aria-label="Black" className="flex w-[33px] items-center justify-center bg-black">
          <span className="size-[21px] rounded-full border-2 border-[#bbb]" />
        </button>
        <button aria-label="Gray" className="w-[33px] bg-[#808080]" />
        <button aria-label="White" className="w-[33px] bg-white" />
      </div>
      <div className="flex grow flex-col gap-[1px]">
        <SwatchRow colors={topSwatches} />
        <SwatchRow colors={bottomSwatches} />
      </div>
      <div className="flex w-[67px] items-center justify-between pr-[3px] pl-[3px]">
        <button aria-label="Previous row"><Icon><path d="M2 11.500l6-7 6 7" stroke="#5c5c5c" strokeWidth="2" /></Icon></button>
        <button aria-label="Next row"><Icon><path d="M2 4.500l6 7 6-7" stroke="#eee" strokeWidth="2" /></Icon></button>
        <button aria-label="Palette menu" className="mt-2"><Icon><path d="M1 2.500h14M1 7.500h14M1 12.500h14" stroke="#eee" strokeWidth="2" /></Icon></button>
      </div>
    </div>
  )
}

function StatusBar() {
  return (
    <footer className="flex h-10 shrink-0 items-center pt-[1px]">
      <div className="grid h-full grid-cols-[43px_71px_42px] grid-rows-2 items-center text-right">
        <span>Fill:</span>
        <span className="pl-[21px] text-center italic">None</span>
        <span />
        <span>Stroke:</span>
        <span className="ml-[21px] h-[18px] rounded-[3px] bg-black" />
        <span>0.265</span>
      </div>
      <span className="ml-[7px] w-[19px]">O:</span>
      <Spin label="Opacity" value="100" className="h-[38px] w-[71px]" full />
      <span className="ml-3 h-5 w-[3px] bg-[#3d84f5]" />
      <button className="ml-[6px] w-[66px] text-left">Layer 1</button>
      <button aria-label="Toggle visibility" className="flex w-4 justify-center">
        <Icon>
          <path d="M0 9q8-9 16 0-8 9-16 0z" fill="#eee" stroke="#000" strokeWidth="1.300" />
          <circle cx="8" cy="8.500" r="3.500" fill="#000" /><circle cx="9" cy="7.500" r="1" fill="#fff" />
          <path d="M1 5l1.500 1.500M4 2l1 2.500M8 1v3M12 2l-1 2.500M15 5l-1.500 1.500" stroke="#000" strokeWidth="1.200" />
        </Icon>
      </button>
      <button aria-label="Toggle lock" className="ml-5 flex w-4 justify-center">
        <Icon>
          <path d="M4 4.500Q4 .5 7 .5t3 3V7" stroke="#000" strokeWidth="1.700" />
          <path d="M3.500 8l9-1.500.8 8-9 1z" fill="#fbf2b4" stroke="#000" strokeWidth=".8" />
          <path d="M8.300 9v4" stroke="#000" strokeWidth="1.600" />
        </Icon>
      </button>
      <span className="ml-[10px] h-[26px] border-l border-[#2c2c2c]" />
      <p className="ml-[7px]">
        <b>Hold ALT</b> while hovering over item to highlight, <b>hold SHIFT</b> and click to hide/lock all.
      </p>
      <span className="ml-auto h-[26px] border-l border-[#2c2c2c]" />
      <div className="grid h-full w-[75px] grid-cols-[auto_1fr] grid-rows-2 items-center pl-[6px]">
        <span>X:</span>
        <span className="text-right">-15.06</span>
        <span>Y:</span>
        <span className="text-right">128.24</span>
      </div>
      <span className="ml-[13px] w-4">Z:</span>
      <Spin label="Zoom" value="102%" className="h-[38px] w-[90px]" center />
      <span className="ml-[10px] w-4">R:</span>
      <Spin label="Rotation" value="0.00º" className="mr-[10px] h-[38px] w-[98px]" center />
    </footer>
  )
}

export default function App() {
  return (
    <div className="flex h-screen min-w-[1400px] flex-col overflow-hidden bg-[#353535] font-['Noto_Sans',sans-serif] text-[13px] leading-[18px] text-[#eeeeec]">
      <svg className="absolute size-0" aria-hidden="true">
        <defs>
          <linearGradient id="blue" x2="1" y2="1"><stop stopColor="#eef4fa" /><stop offset="1" stopColor="#8fb2d6" /></linearGradient>
          <linearGradient id="pink" x2="1" y2="1"><stop stopColor="#fff" /><stop offset="1" stopColor="#ff9cae" /></linearGradient>
          <linearGradient id="green" x2="1" y2="1"><stop stopColor="#e8f6e8" /><stop offset="1" stopColor="#4fae5c" /></linearGradient>
        </defs>
      </svg>
      <TitleBar />
      <nav aria-label="Menu" className="flex h-[27px] shrink-0 items-center border-b border-[#2e2e2e] pt-[2px]">
        {menus.map((m) => (
          <button key={m} className="px-2">{m}</button>
        ))}
      </nav>
      <NodeToolbar />
      <main className="flex min-h-0 grow">
        <Toolbox />
        <div className="w-[2px] shrink-0" />
        <Canvas />
        <div className="flex w-[12px] shrink-0 flex-col items-center justify-center gap-[2px]">
          <span className="size-[3px] rounded-full bg-[#eee]" />
          <span className="size-[3px] rounded-full bg-[#eee]" />
          <span className="size-[3px] rounded-full bg-[#eee]" />
        </div>
        <LayersPanel />
        <div className="flex w-[51px] shrink-0 pl-[3px]"><Commands /></div>
      </main>
      <div className="h-[2px] shrink-0" />
      <Palette />
      <StatusBar />
    </div>
  )
}
